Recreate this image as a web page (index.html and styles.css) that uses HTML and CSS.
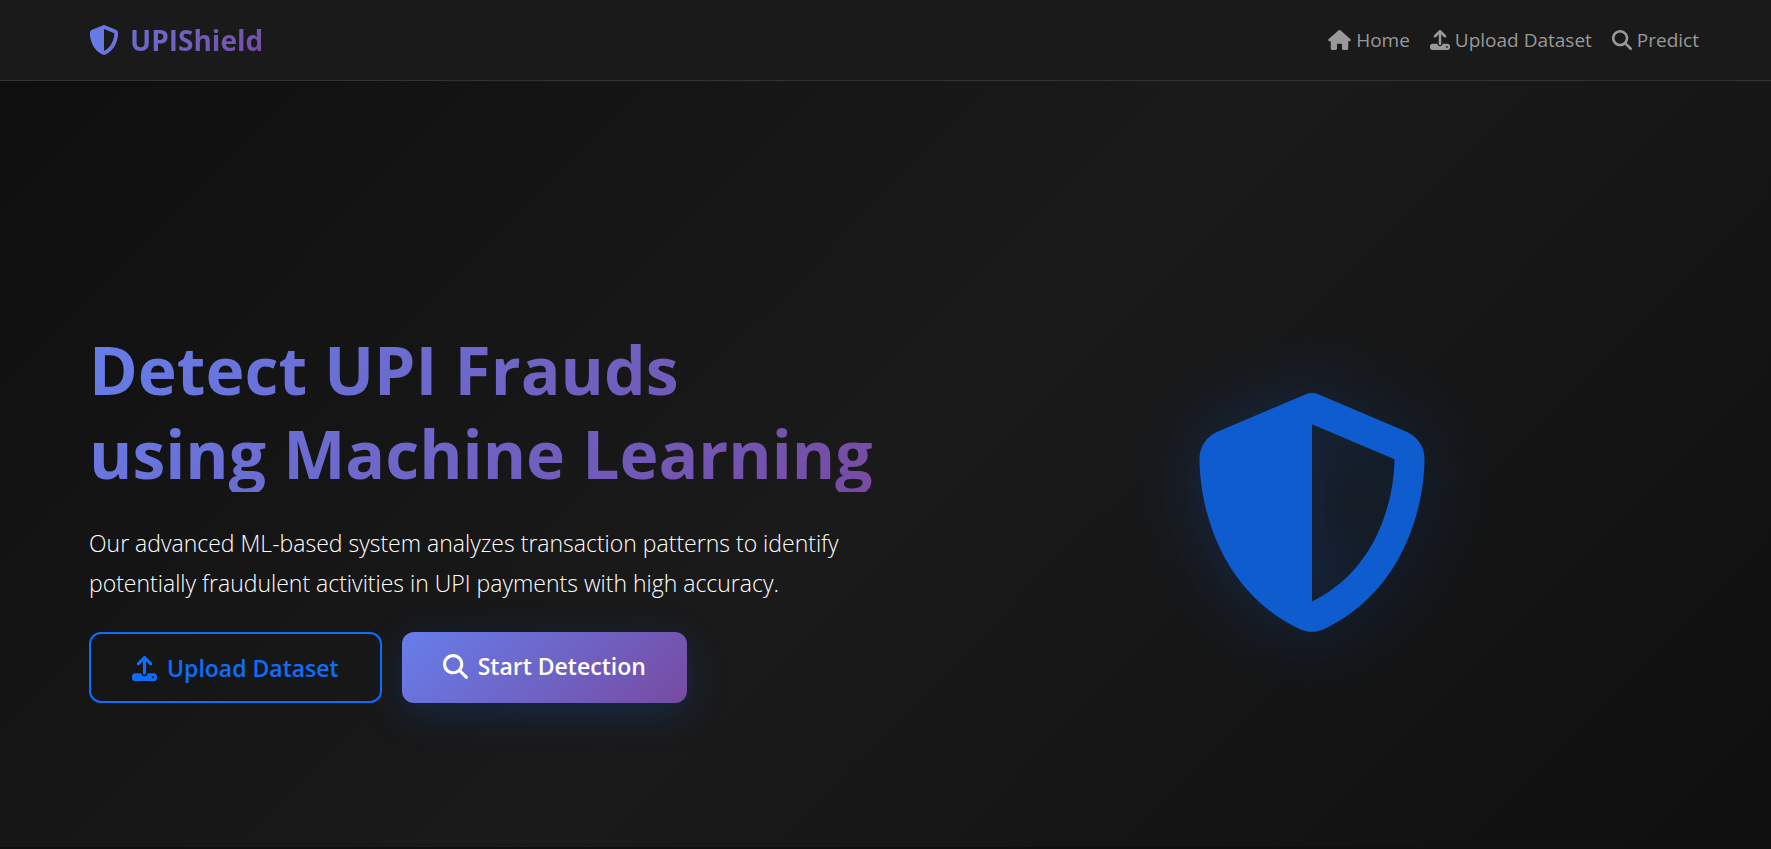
FILE: index.html
```html
<!DOCTYPE html>
<html lang="en">
<head>
<meta charset="utf-8">
<title>UPIShield</title>
<link rel="stylesheet" href="styles.css">
</head>
<body>
<svg class="sprite" aria-hidden="true">
  <defs>
    <linearGradient id="brand-fill" gradientUnits="userSpaceOnUse" x1="0" y1="0" x2="2400" y2="512">
      <stop offset="0" stop-color="#667eea"/>
      <stop offset="1" stop-color="#764ba2"/>
    </linearGradient>
    <symbol id="shield" viewBox="0 0 512 512"><path d="M256 0c4.600 0 9.200 1 13.400 2.900L457.700 82.800c22 9.300 38.400 31 38.300 57.200c-.5 99.200-41.300 280.700-213.600 363.200c-16.700 8-36.100 8-52.800 0C57.300 420.700 16.500 239.200 16 140c-.1-26.200 16.300-47.900 38.300-57.200L242.700 2.900C246.800 1 251.400 0 256 0zm0 66.800V444.800C394 378 431.100 230.100 432 141.400L256 66.800z"/></symbol>
    <symbol id="home" viewBox="0 0 576 512"><path d="M575.800 255.500c0 18-15 32.100-32 32.100h-32l.7 160.200c0 2.700-.2 5.400-.5 8.100V472c0 22.100-17.900 40-40 40H456c-1.100 0-2.200 0-3.300-.1c-1.400 .1-2.800 .1-4.200 .1H416 392c-22.100 0-40-17.900-40-40V448 384c0-17.700-14.300-32-32-32H256c-17.700 0-32 14.300-32 32v64 24c0 22.100-17.900 40-40 40H160 128.100c-1.500 0-3-.1-4.500-.2c-1.200 .1-2.400 .2-3.600 .2H104c-22.100 0-40-17.900-40-40V360c0-.9 0-1.900 .1-2.800V287.600H32c-18 0-32-14-32-32.100c0-9 3-17 10-24L266.400 8c7-7 15-8 22-8s15 2 21 7L564.800 231.500c8 7 12 15 11 24z"/></symbol>
    <symbol id="upload" viewBox="0 0 512 512"><path d="M288 109.300V352c0 17.700-14.300 32-32 32s-32-14.300-32-32V109.300l-73.400 73.400c-12.500 12.500-32.800 12.500-45.300 0s-12.500-32.800 0-45.300l128-128c12.500-12.500 32.800-12.500 45.300 0l128 128c12.500 12.500 12.500 32.800 0 45.300s-32.800 12.500-45.300 0L288 109.300zM64 352H192c0 35.300 28.700 64 64 64s64-28.700 64-64H448c35.300 0 64 28.700 64 64v32c0 35.300-28.700 64-64 64H64c-35.300 0-64-28.700-64-64V416c0-35.300 28.700-64 64-64zM432 456a24 24 0 1 0 0-48 24 24 0 1 0 0 48z"/></symbol>
    <symbol id="search" viewBox="0 0 512 512"><path d="M416 208c0 45.900-14.900 88.300-40 122.700L502.600 457.400c12.500 12.500 12.500 32.800 0 45.300s-32.800 12.500-45.300 0L330.700 376c-34.400 25.200-76.800 40-122.700 40C93.100 416 0 322.900 0 208S93.100 0 208 0S416 93.100 416 208zM208 352a144 144 0 1 0 0-288 144 144 0 1 0 0 288z"/></symbol>
  </defs>
</svg>
<header class="navbar">
  <a class="brand" href="#"><svg class="brand-icon"><use href="#shield"/></svg><span class="brand-name">UPIShield</span></a>
  <nav class="nav">
    <a class="nav-link" href="#"><svg class="icon icon-home"><use href="#home"/></svg>Home</a>
    <a class="nav-link" href="#"><svg class="icon"><use href="#upload"/></svg>Upload Dataset</a>
    <a class="nav-link" href="#"><svg class="icon"><use href="#search"/></svg>Predict</a>
  </nav>
</header>
<main class="hero">
  <section class="intro">
    <h1 class="title">Detect UPI Frauds<br>using Machine Learning</h1>
    <p class="lead">Our advanced ML-based system analyzes transaction patterns to identify<br>potentially fraudulent activities in UPI payments with high accuracy.</p>
    <div class="actions">
      <a class="btn btn-outline" href="#"><svg class="icon"><use href="#upload"/></svg>Upload Dataset</a>
      <a class="btn btn-primary" href="#"><svg class="icon"><use href="#search"/></svg>Start Detection</a>
    </div>
  </section>
  <div class="visual"><svg class="hero-shield"><use href="#shield"/></svg></div>
</main>
</body>
</html>
```
FILE: styles.css
```css
* { box-sizing: border-box; }

body {
  margin: 0;
  min-height: 100vh;
  display: flex;
  flex-direction: column;
  background: #0f0f0f;
  color: #fff;
  font-family: "Segoe UI", "Open Sans", "Noto Sans", sans-serif;
}

a { text-decoration: none; }

.sprite { position: absolute; width: 0; height: 0; }

.navbar {
  display: flex;
  align-items: center;
  justify-content: space-between;
  height: 81px;
  padding: 0 72px 0 89px;
  background: #1a1a1a;
  border-bottom: 1px solid #333;
}

.brand {
  display: flex;
  align-items: center;
  gap: 11px;
  font-size: 28px;
  font-weight: 700;
}

.brand-icon { width: 30px; height: 30px; fill: url(#brand-fill); }

.brand-name {
  background: linear-gradient(135deg, #6a71d5, #764ba2);
  background-clip: text;
  -webkit-background-clip: text;
  color: transparent;
}

.nav { display: flex; gap: 20px; }

.nav-link {
  display: flex;
  align-items: center;
  gap: 5px;
  color: #999;
  font-size: 19px;
}

.icon {
  flex: none;
  width: 1em;
  height: 1em;
  fill: currentColor;
}

.nav-link .icon { width: 20px; height: 20px; }
.nav-link .icon-home { width: 23px; }

.hero {
  flex: 1;
  display: grid;
  grid-template-columns: 1fr 1fr;
  align-items: center;
  gap: 30px;
  margin-bottom: 2px;
  padding: 98px 62px 0 89px;
  background: linear-gradient(135deg, #0f0f0f 0%, #1a1a1a 50%, #0f0f0f 100%);
}

.title {
  width: fit-content;
  height: 168px;
  margin: 0 0 31px;
  padding-top: 3px;
  background: linear-gradient(135deg, #667eea, #764ba2);
  background-clip: text;
  -webkit-background-clip: text;
  color: transparent;
  font-size: 66px;
  font-weight: 700;
  line-height: 84px;
  white-space: nowrap;
}

.lead {
  margin: 0 0 29px;
  font-size: 23px;
  font-weight: 300;
  line-height: 40px;
  white-space: nowrap;
}

.actions { display: flex; gap: 20px; }

.btn {
  display: flex;
  align-items: center;
  gap: 10px;
  height: 71px;
  padding: 0 41px 2px;
  border-radius: 12px;
  font-size: 23px;
  font-weight: 600;
}

.btn .icon { width: 25px; height: 25px; }

.btn-outline {
  padding-top: 4px;
  border: 2px solid #0d6efd;
  color: #0d6efd;
}

.btn-primary {
  background: linear-gradient(135deg, #667eea, #764ba2);
  box-shadow: 0 10px 40px rgba(13, 110, 253, 0.2);
  color: #fff;
}

.visual { display: flex; justify-content: center; }

.hero-shield {
  width: 240px;
  height: 240px;
  overflow: visible;
  fill: #0d6efd;
  opacity: 0.8;
  filter: drop-shadow(0 0 38px rgba(13, 110, 253, 0.3));
}
```
